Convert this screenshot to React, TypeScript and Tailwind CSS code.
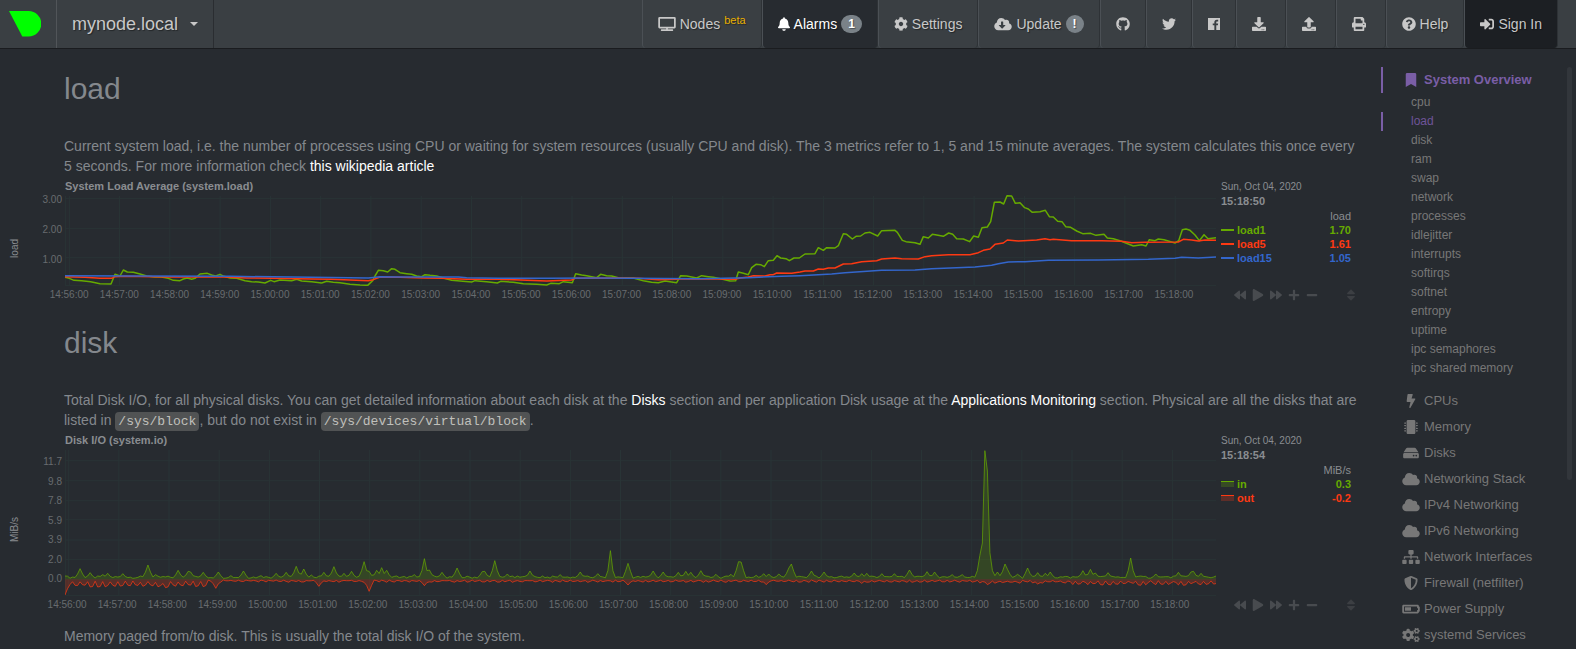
import type { ReactNode } from "react";
import type { IconType } from "react-icons";
import {
  FaBackward,
  FaBatteryHalf,
  FaBell,
  FaBolt,
  FaBookmark,
  FaCloud,
  FaCloudDownloadAlt,
  FaCog,
  FaCogs,
  FaDownload,
  FaForward,
  FaGithub,
  FaHdd,
  FaMicrochip,
  FaMinus,
  FaPlay,
  FaPlus,
  FaPrint,
  FaQuestionCircle,
  FaShieldAlt,
  FaSignInAlt,
  FaSitemap,
  FaSort,
  FaTv,
  FaTwitter,
  FaUpload,
} from "react-icons/fa";

const GREEN = "#66aa00";
const RED = "#fe3912";
const BLUE = "#3366cc";

/* ---------- chart data ---------- */

const LOAD1 =
  "0,250 13,253 27,259 50,260 77,263 105,269 138,270 150,241 165,246 175,228 187,234 205,235 225,240 245,246 270,249 285,248 310,253 325,259 345,260 355,255 367,252 380,256 390,253 405,240 427,238 440,243 452,246 465,241 477,247 495,252 515,253 540,260 560,263 580,264 600,267 617,259 627,263 645,258 680,260 695,256 710,261 740,263 770,267 785,262 805,265 825,266 855,271 885,273 908,274 923,260 930,246 940,229 955,230 968,234 980,224 990,226 1005,236 1025,239 1040,241 1055,246 1070,248 1080,242 1095,244 1115,246 1135,252 1160,259 1185,261 1220,264 1230,260 1265,263 1297,267 1307,262 1345,265 1375,269 1415,271 1445,273 1457,268 1483,269 1495,263 1522,266 1532,239 1550,243 1565,245 1595,251 1607,241 1625,245 1640,246 1660,251 1705,252 1735,260 1760,265 1780,266 1800,261 1835,266 1847,245 1865,246 1895,252 1910,245 1930,248 1945,250 1970,255 1995,261 2012,260 2020,234 2035,238 2050,242 2060,221 2073,211 2087,212 2098,218 2110,200 2125,199 2136,185 2147,192 2163,194 2173,200 2187,192 2203,192 2220,180 2250,179 2260,161 2275,169 2285,161 2310,162 2320,155 2335,119 2345,121 2362,135 2373,127 2387,126 2400,117 2415,115 2438,126 2450,110 2490,109 2497,115 2512,139 2523,143 2550,146 2565,151 2575,128 2590,132 2602,121 2615,123 2635,127 2651,117 2663,121 2675,134 2695,135 2714,143 2726,126 2740,130 2751,101 2767,99 2777,83 2788,25 2805,24 2816,30 2826,5 2840,6 2851,28 2865,26 2879,41 2890,45 2902,55 2925,53 2941,49 2953,68 2965,69 2978,82 2991,83 3002,98 3017,100 3035,111 3053,119 3077,118 3093,124 3117,121 3127,132 3145,134 3167,141 3190,150 3205,156 3230,152 3243,156 3253,137 3270,140 3280,135 3297,137 3330,147 3341,140 3352,107 3363,105 3375,109 3390,123 3403,140 3417,122 3429,134 3453,131";
const LOAD5 =
  "0,248 60,250 105,253 140,253 150,248 180,247 310,249 400,248 480,249 545,252 620,253 740,255 800,256 910,260 925,257 945,249 1005,250 1075,252 1130,253 1205,256 1305,256 1445,261 1520,258 1530,253 1650,252 1720,253 1780,257 1835,256 1850,254 1960,255 2010,256 2025,252 2050,249 2065,245 2100,246 2115,242 2125,242 2135,237 2180,238 2205,234 2220,231 2245,231 2260,225 2275,226 2290,222 2310,222 2335,210 2360,209 2390,203 2435,200 2450,195 2490,192 2510,194 2560,195 2580,188 2600,185 2650,182 2715,182 2740,176 2755,169 2775,165 2790,151 2815,147 2827,138 2860,141 2875,140 2915,138 2940,134 2955,137 2965,136 3020,140 3110,140 3170,142 3200,146 3240,145 3340,144 3355,136 3380,138 3400,141 3420,138 3453,139";
const LOAD15 =
  "0,245 200,246 500,247 910,252 945,248 1005,249 1180,249 1205,251 1300,253 1450,253 1600,252 1900,254 2050,251 2150,247 2205,245 2300,240 2340,236 2450,229 2550,228 2600,224 2730,219 2780,214 2800,209 2830,204 2880,203 2950,199 3100,198 3250,196 3330,193 3350,190 3400,192 3453,189";

const STEP = 7.54;
const SAMPLES = 459;
const ZERO = 394;

const READ_PEAKS: [number, number][] = [
  [1, 10], [45, 32], [75, 20], [116, 14], [128, 18], [174, 17], [250, 43], [271, 14], [340, 27], [368, 24], [375, 22],
  [413, 21], [460, 22], [499, 11], [535, 25], [587, 11], [631, 18], [662, 21], [692, 39], [715, 31], [739, 13],
  [780, 21], [806, 38], [836, 18], [858, 24], [896, 53], [911, 24], [938, 27], [947, 35], [963, 27], [994, 10],
  [1048, 14], [1077, 62], [1091, 28], [1128, 21], [1174, 34], [1250, 23], [1260, 24], [1288, 56], [1326, 16],
  [1393, 25], [1434, 10], [1485, 14], [1543, 22], [1595, 17], [1633, 86], [1687, 48], [1762, 25], [1791, 22],
  [1843, 21], [1859, 24], [1874, 21], [1906, 26], [1950, 15], [1995, 15], [2017, 53], [2025, 52], [2070, 12],
  [2093, 17], [2108, 16], [2145, 16], [2175, 34], [2182, 46], [2236, 25], [2275, 22], [2370, 19], [2393, 17],
  [2409, 18], [2450, 17], [2490, 17], [2530, 30], [2537, 28], [2588, 23], [2612, 22], [2665, 14], [2695, 14],
  [2745, 72], [2752, 109], [2760, 386], [2768, 325], [2775, 80], [2795, 22], [2823, 46], [2831, 30], [2860, 15],
  [2891, 34], [2921, 20], [2943, 18], [2958, 22], [3050, 26], [3079, 30], [3095, 19], [3132, 20], [3199, 64],
  [3274, 16], [3343, 21], [3377, 22], [3385, 24], [3410, 18], [3453, 10],
];

const WRITE_PEAKS: [number, number][] = [
  [0, 47], [8, 28], [300, 25], [451, 27], [760, 21], [911, 36], [1077, 19], [1687, 17], [2100, 16], [2393, 12],
  [2770, 16], [2921, 14],
];

function noise(i: number) {
  const v = Math.sin(i * 12.9898) * 43758.5453;
  return v - Math.floor(v);
}

function sampled(base: (i: number) => number, peaks: [number, number][]) {
  const values = Array.from({ length: SAMPLES }, (_, i) => base(i));
  for (const [x, h] of peaks) {
    const i = Math.round(x / STEP);
    const shoulder = Math.min(h * 0.5, 26);
    values[i] = h;
    if (i > 0) values[i - 1] = Math.max(values[i - 1], shoulder);
    if (i < SAMPLES - 1) values[i + 1] = Math.max(values[i + 1], shoulder);
  }
  return values;
}

function writeBase(i: number) {
  const x = i * STEP;
  const low = i % 3 === 0;
  if (x < 425) return low ? 5 + noise(i) * 4 : 15 + noise(i) * 8;
  if (x > 3020) return low ? 4 + noise(i) * 3 : 9 + noise(i) * 9;
  if (x > 2730) return low ? 3 + noise(i) * 3 : 6 + noise(i) * 6;
  return low ? 2 + noise(i) * 2 : 4 + noise(i) * 5;
}

const READ = sampled((i) => 3 + noise(i) * 7, READ_PEAKS)
  .map((v, i) => `${(i * STEP).toFixed(1)},${(ZERO - v).toFixed(1)}`)
  .join(" ");
const WRITE = sampled(writeBase, WRITE_PEAKS)
  .map((v, i) => `${(i * STEP).toFixed(1)},${(ZERO + v).toFixed(1)}`)
  .join(" ");

const TIMES = Array.from({ length: 23 }, (_, i) => {
  const m = 56 + i;
  return `${14 + Math.floor(m / 60)}:${String(m % 60).padStart(2, "0")}:00`;
});

/* ---------- icons ---------- */

const WIDE: IconType[] = [FaTv, FaCloudDownloadAlt, FaCloud, FaSitemap, FaBatteryHalf, FaCogs];
const NARROW: IconType[] = [FaBell];

function Icon({ of: Glyph }: { of: IconType }) {
  let width = "w-[14px]";
  if (WIDE.includes(Glyph)) width = "w-[18px]";
  if (NARROW.includes(Glyph)) width = "w-3";
  if (Glyph === FaHdd) width = "w-4";
  return <Glyph aria-hidden className={"h-[14px] shrink-0 " + width} />;
}

/* ---------- top bar ---------- */

function NavItem({ children, className = "", label }: { children: ReactNode; className?: string; label?: string }) {
  return (
    <li className="flex">
      <a
        href="#"
        aria-label={label}
        className={
          "flex h-12 items-center gap-1 rounded-b border-l border-r border-l-[#4b5055] border-r-[#2e3236] pl-[15px] text-sm whitespace-nowrap [text-shadow:1px_1px_1px_rgba(0,0,0,0.4)] " +
          (className || "pr-[15px] text-[#c8c8c8]")
        }
      >
        {children}
      </a>
    </li>
  );
}

function Badge({ children }: { children: ReactNode }) {
  return (
    <span className="flex h-[18px] items-center rounded-full bg-[#7a8288] px-[7px] text-xs font-bold text-white">
      {children}
    </span>
  );
}

function TopBar() {
  return (
    <header className="flex h-[49px] shrink-0 border-b border-[#1a1c1f] bg-[#3a3f43] pr-[18px]">
      <a href="#" aria-label="netdata" className="flex w-[57px] items-center border-r border-[#515559] pl-[9px]">
        <svg viewBox="0 0 32 26" className="h-[26px] w-8" aria-hidden>
          <path d="M0 0H19.5A12.7 12.7 0 0 1 19.5 25.6H13.3Z" fill="#00ff00" />
        </svg>
      </a>
      <button
        type="button"
        className="flex items-center gap-3 border-r border-[#2a2d31] pr-[15px] pb-px pl-[15px] text-lg text-[#c8c8c8] [text-shadow:1px_1px_1px_rgba(0,0,0,0.4)]"
      >
        mynode.local
        <svg viewBox="0 0 8 4" className="h-1 w-2" aria-hidden>
          <path d="M0 0H8L4 4Z" fill="#c8c8c8" />
        </svg>
      </button>
      <ul className="ml-auto flex">
        <NavItem>
          <Icon of={FaTv} />
          <span>Nodes</span>
          <sup className="top-0 -mt-2 text-[11px] text-[#e8b000]">beta</sup>
        </NavItem>
        <NavItem className="bg-[#272b30] pr-[15px] text-white">
          <Icon of={FaBell} />
          <span>Alarms</span>
          <Badge>1</Badge>
        </NavItem>
        <NavItem>
          <Icon of={FaCog} />
          <span>Settings</span>
        </NavItem>
        <NavItem>
          <Icon of={FaCloudDownloadAlt} />
          <span>Update</span>
          <Badge>!</Badge>
        </NavItem>
        <NavItem label="GitHub">
          <Icon of={FaGithub} />
        </NavItem>
        <NavItem label="Twitter">
          <Icon of={FaTwitter} />
        </NavItem>
        <NavItem label="Facebook">
          <svg viewBox="0 0 448 512" className="h-[14px] w-3" fill="currentColor" aria-hidden>
            <path d="M448 32v448H309V306h60l9-69h-69v-44c0-20 6-34 34-34h37V97c-6-1-28-3-54-3-53 0-89 33-89 92v51h-60v69h60v174H0V32z" />
          </svg>
        </NavItem>
        <NavItem label="Import" className="pr-[19px] text-[#c8c8c8]">
          <Icon of={FaDownload} />
        </NavItem>
        <NavItem label="Export" className="pr-[19px] text-[#c8c8c8]">
          <Icon of={FaUpload} />
        </NavItem>
        <NavItem label="Print" className="pr-[19px] text-[#c8c8c8]">
          <Icon of={FaPrint} />
        </NavItem>
        <NavItem>
          <Icon of={FaQuestionCircle} />
          <span>Help</span>
        </NavItem>
        <NavItem className="bg-[#1c1f23] pr-[15px] text-[#c8c8c8]">
          <Icon of={FaSignInAlt} />
          <span>Sign In</span>
        </NavItem>
      </ul>
    </header>
  );
}

/* ---------- charts ---------- */

type Series = { name: string; value: string; color: string; area?: boolean };

const TOOLS: [string, IconType][] = [
  ["Pan left", FaBackward],
  ["Play", FaPlay],
  ["Pan right", FaForward],
  ["Zoom in", FaPlus],
  ["Zoom out", FaMinus],
];

function Legend({ time, unit, series }: { time: string; unit: string; series: Series[] }) {
  return (
    <div className="flex w-[145px] shrink-0 flex-col pt-px pr-[10px] pl-[5px] text-[11px] leading-[14px] text-[#8a8d91]">
      <div className="text-[10px]">Sun, Oct 04, 2020</div>
      <div className="font-bold">{time}</div>
      <table className="mt-px w-full">
        <thead>
          <tr>
            <th className="p-0" />
            <th scope="col" className="p-0 text-right font-normal">
              {unit}
            </th>
          </tr>
        </thead>
        <tbody className="font-bold">
          {series.map((s) => (
            <tr key={s.name} style={{ color: s.color }}>
              <th scope="row" className="p-0 text-left">
                <span className="flex items-center gap-[3px]">
                  <svg viewBox="0 0 13 6" className="h-[6px] w-[13px]" aria-hidden>
                    {s.area && <rect y="1" width="13" height="5" fill="currentColor" fillOpacity="0.25" />}
                    <rect y={s.area ? 0 : 2} width="13" height={s.area ? 1 : 2} fill="currentColor" />
                  </svg>
                  {s.name}
                </span>
              </th>
              <td className="p-0 text-right">{s.value}</td>
            </tr>
          ))}
        </tbody>
      </table>
      <div className="mt-auto flex h-[14px] items-center text-[#484b4f]">
        <div className="flex flex-1 items-center pl-[10px]">
          {TOOLS.map(([label, Glyph]) => (
            <button key={label} type="button" aria-label={label} className="flex w-[18px] justify-center">
              <Glyph className="size-3" />
            </button>
          ))}
        </div>
        <button type="button" aria-label="Resize" className="-mr-[7px] text-[#3c3f43]">
          <FaSort className="size-[14px]" />
        </button>
      </div>
    </div>
  );
}

type ChartProps = {
  title: string;
  unit: string;
  ticks: string[];
  ticksClass: string;
  axisClass: string;
  timesClass: string;
  legend: ReactNode;
  children: ReactNode;
};

function Chart({ title, unit, ticks, ticksClass, axisClass, timesClass, legend, children }: ChartProps) {
  return (
    <figure className="-ml-16 flex">
      <div className="flex w-[65px] shrink-0 text-[10px] leading-[14px]">
        <div className={"flex w-[30px] items-start justify-center text-[#8a8d91] " + axisClass}>
          <span className="rotate-180 [writing-mode:vertical-rl]">{unit}</span>
        </div>
        <div className={"flex flex-1 flex-col justify-between pr-[3px] text-right text-[#676b6f] " + ticksClass}>
          {ticks.map((t) => (
            <span key={t}>{t}</span>
          ))}
        </div>
      </div>
      <div className="min-w-0 flex-1">
        <figcaption className="mb-px text-[11px] leading-[14px] font-bold text-[#8a8d91]">{title}</figcaption>
        {children}
        <div className={"flex pt-0.5 text-center text-[10px] leading-[14px] text-[#676b6f] " + timesClass}>
          {TIMES.map((t) => (
            <span key={t} className="flex w-0 flex-1 justify-center whitespace-nowrap">
              {t}
            </span>
          ))}
        </div>
      </div>
      {legend}
    </figure>
  );
}

type GridProps = { rows: number[]; first: number; gap: number; top: number; bottom: number };

function GridLines({ rows, first, gap, top, bottom }: GridProps) {
  return (
    <g stroke="#293436" strokeWidth="1">
      {rows.map((y) => (
        <line key={y} x1="0" x2="3453" y1={y} y2={y} vectorEffect="non-scaling-stroke" />
      ))}
      <line x1="1" x2="1" y1={top} y2={bottom} vectorEffect="non-scaling-stroke" />
      {TIMES.map((t, i) => (
        <line
          key={t}
          x1={first + i * gap}
          x2={first + i * gap}
          y1={top}
          y2={bottom}
          vectorEffect="non-scaling-stroke"
        />
      ))}
    </g>
  );
}

function Line({ points, color }: { points: string; color: string }) {
  return (
    <polyline
      points={points}
      fill="none"
      stroke={color}
      strokeWidth="1.5"
      strokeLinejoin="round"
      vectorEffect="non-scaling-stroke"
    />
  );
}

function Area({ points, color }: { points: string; color: string }) {
  return (
    <g>
      <polygon points={`0,${ZERO} ${points} 3453,${ZERO}`} fill={color} fillOpacity="0.22" />
      <polyline
        points={points}
        fill="none"
        stroke={color}
        strokeOpacity="0.7"
        strokeWidth="1"
        vectorEffect="non-scaling-stroke"
      />
    </g>
  );
}

/* ---------- side menu ---------- */

const SUBMENU = [
  "cpu", "load", "disk", "ram", "swap", "network", "processes", "idlejitter", "interrupts", "softirqs", "softnet",
  "entropy", "uptime", "ipc semaphores", "ipc shared memory",
];

const MENU: [string, IconType][] = [
  ["CPUs", FaBolt],
  ["Memory", FaMicrochip],
  ["Disks", FaHdd],
  ["Networking Stack", FaCloud],
  ["IPv4 Networking", FaCloud],
  ["IPv6 Networking", FaCloud],
  ["Network Interfaces", FaSitemap],
  ["Firewall (netfilter)", FaShieldAlt],
  ["Power Supply", FaBatteryHalf],
  ["systemd Services", FaCogs],
];

function MenuRow({ name, icon, active }: { name: string; icon: IconType; active?: boolean }) {
  return (
    <a
      href="#"
      className={
        "flex h-[26px] items-center border-l-2 pl-[18px] text-[13px] " +
        (active ? "border-[#7a5ea6] font-bold text-[#7a5ea6]" : "border-transparent text-[#777777]")
      }
    >
      <span className="flex w-5 justify-center">
        <Icon of={icon} />
      </span>
      <span className="pl-[3px]">{name}</span>
    </a>
  );
}

function SideMenu() {
  return (
    <aside className="flex w-[195px] shrink-0 pt-[18px] pr-1">
      <nav className="flex-1">
        <MenuRow name="System Overview" icon={FaBookmark} active />
        <ul className="pb-[10px]">
          {SUBMENU.map((s) => (
            <li key={s}>
              <a
                href="#"
                className={
                  "block h-[19px] border-l-2 pl-7 text-xs leading-[19px] " +
                  (s === "load" ? "border-[#7a5ea6] text-[#6f5499]" : "border-transparent text-[#777777]")
                }
              >
                {s}
              </a>
            </li>
          ))}
        </ul>
        {MENU.map(([name, icon]) => (
          <MenuRow key={name} name={name} icon={icon} />
        ))}
      </nav>
      <div className="h-[413px] w-[5px] rounded-full bg-[#32363b]" />
    </aside>
  );
}

/* ---------- page ---------- */

function Heading({ children }: { children: ReactNode }) {
  return <h1 className="mb-[31px] text-3xl leading-[33px] text-[#84888d]">{children}</h1>;
}

function Link({ children }: { children: ReactNode }) {
  return (
    <a href="#" className="text-white">
      {children}
    </a>
  );
}

function Code({ children }: { children: ReactNode }) {
  return (
    <code className="rounded bg-[#515354] px-[3px] py-0.5 font-['Liberation_Mono',monospace] text-[13px] leading-none text-[#c0c0bc]">
      {children}
    </code>
  );
}

export default function App() {
  return (
    <div className="flex h-screen flex-col overflow-hidden bg-[#272b30] font-['Liberation_Sans',Arial,sans-serif] text-sm leading-5 text-[#84888d]">
      <TopBar />
      <div className="flex min-h-0 flex-1">
        <main className="min-w-0 flex-1 overflow-hidden pt-[23px] pr-5 pl-16">
          <section className="mb-6">
            <Heading>load</Heading>
            <p className="mb-[3px]">
              Current system load, i.e. the number of processes using CPU or waiting for system resources (usually CPU
              and disk). The 3 metrics refer to 1, 5 and 15 minute averages. The system calculates this once every 5
              seconds. For more information check <Link>this wikipedia article</Link>
            </p>
            <Chart
              title="System Load Average (system.load)"
              unit="load"
              ticks={["3.00", "2.00", "1.00"]}
              ticksClass="mt-[14px] h-[74px]"
              axisClass="pt-[60px]"
              timesClass="-ml-[21px] mr-[17px]"
              legend={
                <Legend
                  time="15:18:50"
                  unit="load"
                  series={[
                    { name: "load1", value: "1.70", color: GREEN },
                    { name: "load5", value: "1.61", color: RED },
                    { name: "load15", value: "1.05", color: BLUE },
                  ]}
                />
              }
            >
              <svg viewBox="0 0 3453 276" preserveAspectRatio="none" className="block h-[92px] w-full">
                <GridLines rows={[13, 103, 191, 274]} first={13} gap={150.8} top={6} bottom={274} />
                <Line points={LOAD1} color={GREEN} />
                <Line points={LOAD5} color={RED} />
                <Line points={LOAD15} color={BLUE} />
              </svg>
            </Chart>
          </section>
          <section>
            <Heading>disk</Heading>
            <p className="mb-[3px]">
              Total Disk I/O, for all physical disks. You can get detailed information about each disk at the{" "}
              <Link>Disks</Link> section and per application Disk usage at the <Link>Applications Monitoring</Link>{" "}
              section. Physical are all the disks that are listed in <Code>/sys/block</Code>, but do not exist in{" "}
              <Code>/sys/devices/virtual/block</Code>.
            </p>
            <Chart
              title="Disk I/O (system.io)"
              unit="MiB/s"
              ticks={["11.7", "9.8", "7.8", "5.9", "3.9", "2.0", "0.0"]}
              ticksClass="mt-[22px] h-[131px]"
              axisClass="pt-[84px]"
              timesClass="-ml-[23px] mr-[21px]"
              legend={
                <Legend
                  time="15:18:54"
                  unit="MiB/s"
                  series={[
                    { name: "in", value: "0.3", color: GREEN, area: true },
                    { name: "out", value: "-0.2", color: RED, area: true },
                  ]}
                />
              }
            >
              <svg viewBox="0 0 3453 444" preserveAspectRatio="none" className="block h-[148px] w-full">
                <GridLines rows={[38, 98, 158, 215, 276, 334, 394, 442]} first={11} gap={150.5} top={6} bottom={442} />
                <Area points={READ} color={GREEN} />
                <Area points={WRITE} color={RED} />
              </svg>
            </Chart>
            <p className="pt-[14px]">Memory paged from/to disk. This is usually the total disk I/O of the system.</p>
          </section>
        </main>
        <SideMenu />
      </div>
    </div>
  );
}
